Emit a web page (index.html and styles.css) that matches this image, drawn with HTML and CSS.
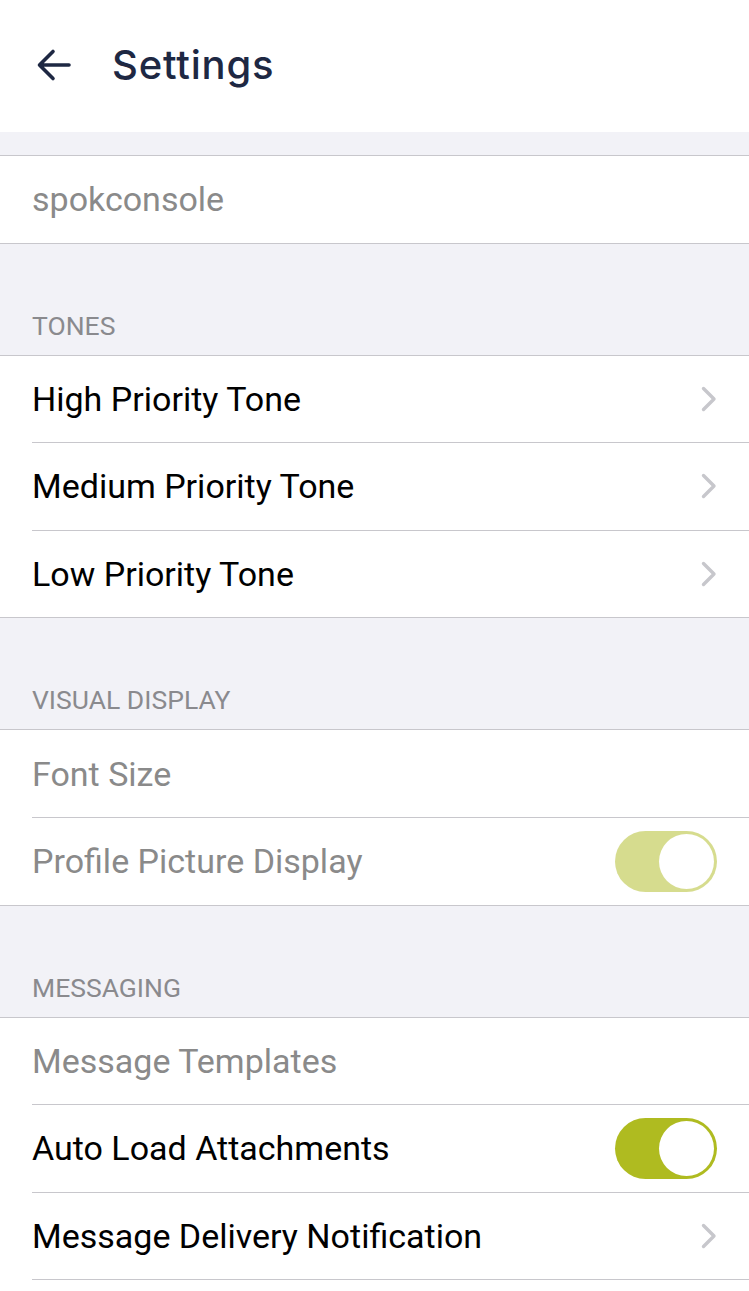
FILE: index.html
```html
<!DOCTYPE html>
<html lang="en">
<head>
    <meta charset="UTF-8">
    <meta name="viewport" content="width=device-width, initial-scale=1.0">
    <title>Settings</title>
    <link rel="stylesheet" href="styles.css">
</head>
<body>

<!-- Top Bar -->
<header class="top-bar">
    <button class="back-btn" aria-label="Back">
        <svg width="36" height="34" viewBox="0 0 36 34">
            <path d="M33 17 H4 M17 3.5 L3.5 17 L17 30.5" fill="none" stroke="#1e2843" stroke-width="3.6" stroke-linecap="round" stroke-linejoin="round"/>
        </svg>
    </button>
    <h1>Settings</h1>
</header>

<div class="gap"></div>
<div class="list">
    <div class="row last"><span class="label muted">spokconsole</span></div>
</div>

<!-- Tones -->
<div class="section-title">TONES</div>
<div class="list">
    <div class="row"><span class="label">High Priority Tone</span><span class="chevron"></span></div>
    <div class="row"><span class="label">Medium Priority Tone</span><span class="chevron"></span></div>
    <div class="row last"><span class="label">Low Priority Tone</span><span class="chevron"></span></div>
</div>

<!-- Visual Display -->
<div class="section-title">VISUAL DISPLAY</div>
<div class="list">
    <div class="row"><span class="label muted">Font Size</span></div>
    <div class="row last">
        <span class="label muted">Profile Picture Display</span>
        <span class="switch disabled"><span class="knob"></span></span>
    </div>
</div>

<!-- Messaging -->
<div class="section-title">MESSAGING</div>
<div class="list open">
    <div class="row"><span class="label muted">Message Templates</span></div>
    <div class="row">
        <span class="label">Auto Load Attachments</span>
        <span class="switch"><span class="knob"></span></span>
    </div>
    <div class="row"><span class="label">Message Delivery Notification</span><span class="chevron"></span></div>
</div>

</body>
</html>
```

FILE: styles.css
```css
* {
    box-sizing: border-box;
    margin: 0;
    padding: 0;
}

body {
    background: #f2f2f7;
    font-family: Roboto, "Liberation Sans", sans-serif;
    height: 1291px;
    overflow: hidden;
}

.top-bar {
    height: 132px;
    background: white;
    display: flex;
    align-items: center;
    padding-left: 36px;
    padding-bottom: 3px;
}

.back-btn {
    background: none;
    border: none;
    width: 36px;
    height: 34px;
    margin-right: 40px;
    display: flex;
}

.top-bar h1 {
    font-family: Inter, "Open Sans", sans-serif;
    font-weight: 500;
    font-size: 40px;
    letter-spacing: 0.8px;
    color: #1e2843;
}

.gap {
    height: 23px;
}

.section-title {
    height: 111px;
    display: flex;
    align-items: flex-end;
    padding: 0 32px 14px;
    font-size: 26.5px;
    color: #8a8a8e;
}

.list {
    background: white;
    border-top: 1px solid #c8c7cc;
    border-bottom: 1px solid #c8c7cc;
}

.list.open {
    border-bottom: none;
    height: 300px;
}

.row {
    height: 87.6px;
    margin-left: 32px;
    padding-right: 32px;
    display: flex;
    align-items: center;
    justify-content: space-between;
    border-bottom: 1px solid #c8c7cc;
}

.row.last {
    height: 86.6px;
    border-bottom: none;
}

.label {
    font-size: 34px;
    color: #000;
}

.label.muted {
    color: #8a8a8a;
}

.chevron {
    width: 16px;
    height: 26px;
    background: url("data:image/svg+xml;utf8,<svg xmlns='http://www.w3.org/2000/svg' width='16' height='26' viewBox='0 0 16 26'><path d='M2.5 2.5 L13 13 L2.5 23.5' fill='none' stroke='%23c7c7cc' stroke-width='3.4' stroke-linecap='round' stroke-linejoin='round'/></svg>") no-repeat center;
}

.switch {
    width: 102px;
    height: 61px;
    border-radius: 31px;
    background: #afbb20;
    display: flex;
    align-items: center;
    justify-content: flex-end;
    padding-right: 3px;
}

.switch.disabled {
    opacity: 0.5;
}

.knob {
    width: 55px;
    height: 55px;
    border-radius: 50%;
    background: white;
}
```
